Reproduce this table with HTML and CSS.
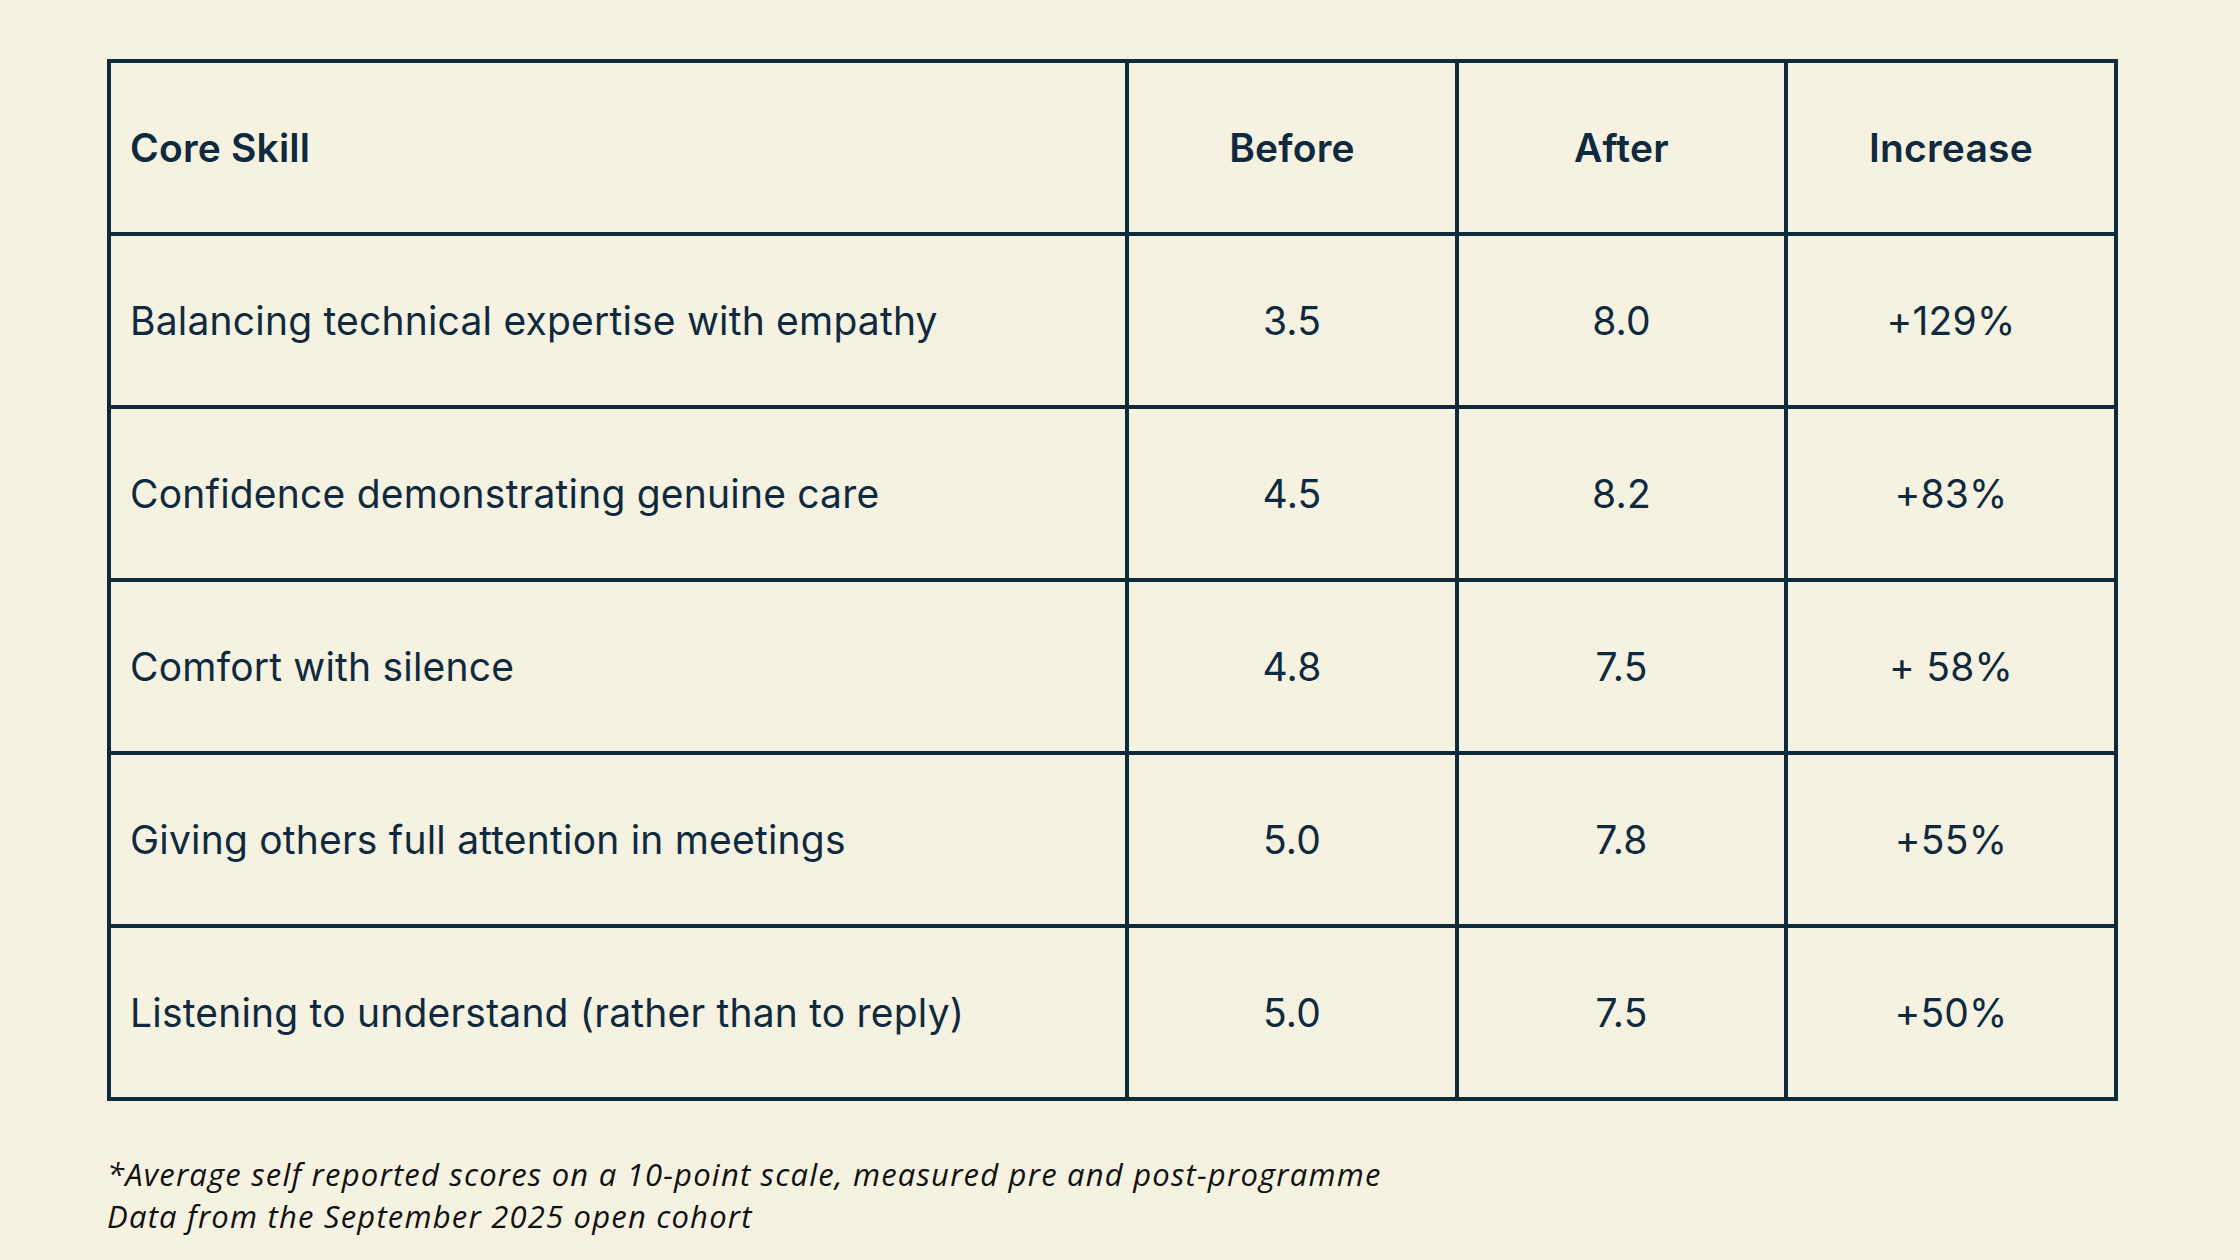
FILE: index.html
```html
<!DOCTYPE html>
<html lang="en">
<head>
<meta charset="utf-8">
<title>Core Skill Scores</title>
<link rel="stylesheet" href="styles.css">
</head>
<body>
<main class="page">
  <div class="table">
    <div class="cell skill head">Core Skill</div>
    <div class="cell head">Before</div>
    <div class="cell head">After</div>
    <div class="cell head">Increase</div>

    <div class="cell skill">Balancing technical expertise with empathy</div>
    <div class="cell">3.5</div>
    <div class="cell">8.0</div>
    <div class="cell">+129%</div>

    <div class="cell skill">Confidence demonstrating genuine care</div>
    <div class="cell">4.5</div>
    <div class="cell">8.2</div>
    <div class="cell">+83%</div>

    <div class="cell skill">Comfort with silence</div>
    <div class="cell">4.8</div>
    <div class="cell">7.5</div>
    <div class="cell">+ 58%</div>

    <div class="cell skill">Giving others full attention in meetings</div>
    <div class="cell">5.0</div>
    <div class="cell">7.8</div>
    <div class="cell">+55%</div>

    <div class="cell skill">Listening to understand (rather than to reply)</div>
    <div class="cell">5.0</div>
    <div class="cell">7.5</div>
    <div class="cell">+50%</div>
  </div>
  <p class="note">*Average self reported scores on a 10-point scale, measured pre and post-programme<br>Data from the September 2025 open cohort</p>
</main>
</body>
</html>
```

FILE: styles.css
```css
html, body {
  margin: 0;
  padding: 0;
  background: #f5f2e1;
}
body {
  width: 2240px;
  height: 1260px;
  overflow: hidden;
}
.page {
  padding: 59px 0 0 107px;
}
.table {
  display: grid;
  grid-template-columns: 1014px 326px 325px 326px;
  grid-auto-rows: 169px;
  gap: 4px;
  padding: 4px;
  width: max-content;
  background: #0e2a3d;
}
.cell {
  background: #f5f2e1;
  display: flex;
  align-items: center;
  justify-content: center;
  font-family: "Inter", "Liberation Sans", sans-serif;
  font-size: 39px;
  font-weight: 400;
  letter-spacing: 0.2px;
  color: #0f2a3e;
}
.cell.skill {
  justify-content: flex-start;
  padding-left: 19px;
}
.cell.head {
  font-weight: 600;
}
.note {
  margin: 52px 0 0 0;
  font-family: "Open Sans", "Liberation Sans", sans-serif;
  font-style: italic;
  font-size: 31px;
  line-height: 42px;
  letter-spacing: 1.2px;
  color: #111111;
}
```
